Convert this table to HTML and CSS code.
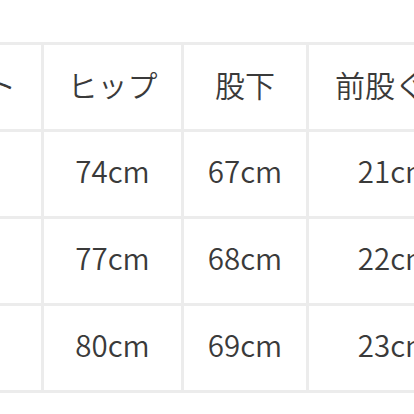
FILE: index.html
```html
<!DOCTYPE html>
<html lang="ja">
<head>
<meta charset="utf-8">
<link rel="stylesheet" href="styles.css">
</head>
<body>
<div class="frame">
  <table class="size-table">
    <colgroup>
      <col class="c-waist">
      <col class="c-hip">
      <col class="c-inseam">
      <col class="c-rise">
    </colgroup>
    <tr class="head">
      <td>ウエスト</td><td>ヒップ</td><td>股下</td><td>前股ぐり</td>
    </tr>
    <tr>
      <td>62cm</td><td>74cm</td><td>67cm</td><td>21cm</td>
    </tr>
    <tr>
      <td>64cm</td><td>77cm</td><td>68cm</td><td>22cm</td>
    </tr>
    <tr>
      <td>66cm</td><td>80cm</td><td>69cm</td><td>23cm</td>
    </tr>
  </table>
</div>
</body>
</html>
```

FILE: styles.css
```css
html, body {
  margin: 0;
  padding: 0;
  background: #ffffff;
  width: 414px;
  height: 414px;
  overflow: hidden;
}

.frame {
  padding-top: 42px;
}

.size-table {
  margin-left: -132px;
  border-collapse: separate;
  border-spacing: 3px;
  background: #ececec;
  table-layout: fixed;
  width: 613px;
  font-family: "Noto Sans CJK JP", "Noto Sans", sans-serif;
  font-size: 29.5px;
  font-weight: 350;
  color: #3a3a3a;
}

.c-waist { width: 170px; }
.c-hip { width: 137px; }
.c-inseam { width: 122px; }
.c-rise { width: 172px; }

.size-table tr {
  height: 84px;
}

.size-table td {
  background: #ffffff;
  padding: 0 0 6px 0;
  text-align: center;
  vertical-align: middle;
  line-height: 1;
  white-space: nowrap;
}

.size-table .head td {
  font-size: 30px;
}
```
